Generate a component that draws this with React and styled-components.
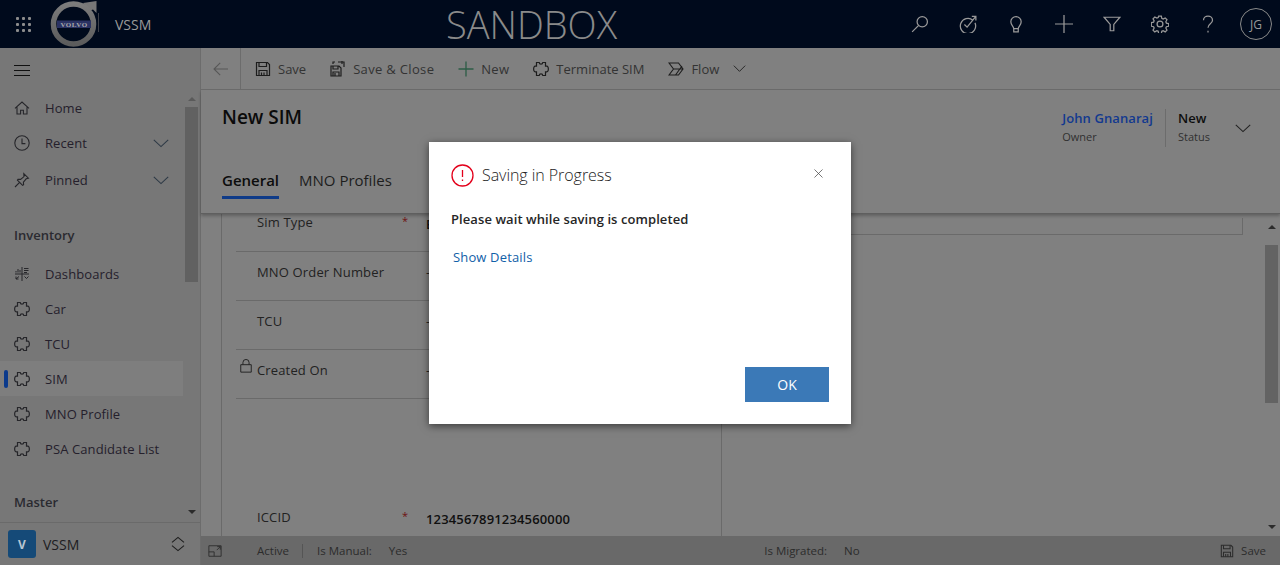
import React from 'react'
import styled, { createGlobalStyle } from 'styled-components'
import { X } from 'lucide-react'

const Global = createGlobalStyle`
  html, body { margin: 0; padding: 0; height: 100%; overflow: hidden; }
  body { font-family: "Open Sans", "Liberation Sans", sans-serif; }
  * { box-sizing: border-box; }
`

const IcoSvg = styled.svg`
  flex: none;
  display: block;
`

// svg helper, everything here is thin line icons
const Ico = ({ size = 16, w = 1.1, children }) => (
  <IcoSvg width={size} height={size} viewBox="0 0 16 16" fill="none" stroke="currentColor" strokeWidth={w}>
    {children}
  </IcoSvg>
)

const Puzzle = ({ size = 16 }) => (
  <Ico size={size} w={1.2}>
    <path d="M3.500 1.500H6.200c.1 2.200 3.500 2.200 3.600 0h2.700v3.700h1.200c2.200-.3 2.200 5.900 0 5.600h-1.200v3.700H9.800c-.1-2.200-3.500-2.200-3.600 0H3.500v-3.700H2.300c-2.200.3-2.200-5.900 0-5.600h1.200z" />
  </Ico>
)

const SaveIcon = ({ size = 16 }) => (
  <Ico size={size} w={1.2}>
    <path d="M1.500 1.500h11l2 2v11h-13z" />
    <path d="M4 1.500v4h7.500v-4M4 14.500V9.500h8v5M6.500 11.500v3M9 11.500v3" />
  </Ico>
)

const Chevron = ({ size = 16 }) => (
  <Ico size={size}>
    <path d="M.8 4.800 8 11.600l7.200-6.800" />
  </Ico>
)

const Page = styled.div`
  position: relative;
  width: 1280px;
  height: 565px;
  display: flex;
  flex-direction: column;
  overflow: hidden;
  background: #808080;
`

const TopBar = styled.header`
  height: 48px;
  flex: none;
  background: #000a1c;
  display: flex;
  align-items: center;
  color: #a0a0a0;
`

const Waffle = styled.div`
  width: 16px;
  height: 15px;
  margin-left: 16px;
  display: grid;
  grid-template-columns: repeat(3, 3px);
  grid-auto-rows: 3px;
  gap: 3px;
  span { background: #8c8c8c; border-radius: 1px; }
`

const LogoWrap = styled.div`
  margin-left: 18px;
  width: 50px;
  height: 48px;
  flex: none;
`

const AppName = styled.div`
  margin-left: 15px;
  font-size: 14px;
  color: #9a9a9a;
  width: 60px;
`

const Sandbox = styled.div`
  margin-left: 271px;
  line-height: 48px;
  font-size: 38px;
  font-weight: 300;
  color: #8a8a8a;
`

const TopIcons = styled.div`
  margin-left: auto;
  display: flex;
  align-items: center;
`

const TopBtn = styled.div`
  width: 48px;
  height: 48px;
  display: flex;
  align-items: center;
  justify-content: center;
  color: #9a9a9a;
`

const Avatar = styled.div`
  width: 32px;
  height: 32px;
  margin: 0 8px;
  border: 1px solid #8a8a8a;
  border-radius: 50%;
  display: flex;
  align-items: center;
  justify-content: center;
  font-size: 12px;
  color: #9a9a9a;
`

const Body = styled.div`
  flex: 1;
  min-height: 0;
  display: flex;
`

const Side = styled.aside`
  width: 201px;
  flex: none;
  background: #777777;
  border-right: 1px solid #6c6c6c;
  display: flex;
  flex-direction: column;
  position: relative;
`

const Burger = styled.div`
  height: 42px;
  flex: none;
  padding: 17px 0 0 14px;
  i { display: block; width: 16px; height: 1px; background: #111; margin-bottom: 4px; }
`

const NavScroll = styled.div`
  flex: 1;
  min-height: 0;
  overflow: hidden;
`

const NavRow = styled.div`
  height: ${p => p.$h || 35}px;
  width: 183px;
  display: flex;
  align-items: center;
  padding-left: 14px;
  font-size: 13px;
  letter-spacing: 0.1px;
  color: #25202c;
  position: relative;
  background: ${p => (p.$active ? '#7e7e7e' : 'transparent')};
`

const NavIcon = styled.span`
  width: 31px;
  flex: none;
  color: #26262a;
`

const NavChevron = styled.span`
  margin-left: auto;
  margin-right: 14px;
  color: #2e3a46;
`

const ActiveMark = styled.i`
  position: absolute;
  left: 4px;
  top: 9px;
  width: 4px;
  height: 18px;
  border-radius: 2px;
  background: #0b3a8c;
`

const SectionLabel = styled.div`
  height: ${p => p.$h}px;
  padding: ${p => p.$top}px 0 0 14px;
  font-size: 13px;
  font-weight: 600;
  color: #2a2a30;
`

const SideScroll = styled.div`
  position: absolute;
  right: 0;
  top: 42px;
  bottom: 43px;
  width: 16px;
  padding: 7px 0 8px;
  display: flex;
  flex-direction: column;
  align-items: center;
  justify-content: space-between;
`

const Arrow = styled.i`
  display: block;
  width: 0;
  height: 0;
  border-left: 4px solid transparent;
  border-right: 4px solid transparent;
  ${p => (p.$down ? 'border-top: 4px solid #2b2b2b;' : `border-bottom: 4px solid ${p.$color || '#2b2b2b'};`)}
`

const SideThumb = styled.div`
  position: absolute;
  left: 1px;
  top: 17px;
  width: 13px;
  height: 175px;
  background: #616161;
`

const AreaSwitch = styled.div`
  height: 43px;
  flex: none;
  border-top: 1px solid #6a6a6a;
  display: flex;
  align-items: center;
  padding-left: 8px;
  font-size: 14px;
  color: #1d1d22;
`

const AreaBadge = styled.div`
  width: 28px;
  height: 28px;
  border-radius: 3px;
  background: #154a78;
  color: #b9c6d2;
  font-size: 12px;
  font-weight: 700;
  display: flex;
  align-items: center;
  justify-content: center;
  margin-right: 7px;
`

const AreaSort = styled.div`
  margin-left: auto;
  margin-right: 14px;
  color: #1e1e1e;
`

const Main = styled.main`
  flex: 1;
  min-width: 0;
  display: flex;
  flex-direction: column;
`

const CommandBar = styled.div`
  height: 42px;
  flex: none;
  display: flex;
  align-items: center;
  border-bottom: 1px solid #6c6c6c;
  font-size: 13px;
  color: #2b2b2b;
`

const BackBtn = styled.div`
  width: 40px;
  height: 41px;
  display: flex;
  align-items: center;
  justify-content: center;
  border-right: 1px solid #6c6c6c;
  color: #575757;
  margin-right: 2px;
`

const Cmd = styled.div`
  display: flex;
  align-items: center;
  gap: 7px;
  padding: 0 12px;
  white-space: nowrap;
  color: #333;
  letter-spacing: ${p => p.$ls || 0}px;
  svg { color: ${p => p.$icon || '#1d1d1d'}; }
`

const CmdMore = styled.span`
  margin-left: 7px;
  color: #444;
`

const FormHead = styled.div`
  height: 124px;
  flex: none;
  position: relative;
  padding: 0 21px;
  box-shadow: 0 2px 3px rgba(0, 0, 0, 0.25);
  border-bottom: 1px solid #5f5f5f;
  z-index: 1;
`

const Title = styled.h1`
  margin: 0;
  padding-top: 13px;
  font-size: 19px;
  line-height: 28px;
  font-weight: 600;
  color: #0b0b0b;
`

const Tabs = styled.div`
  display: flex;
  gap: 20px;
  margin-top: 37px;
  font-size: 15px;
`

const Tab = styled.div`
  height: 31px;
  line-height: 25px;
  color: ${p => (p.$on ? '#0c0c0c' : '#1d1d1d')};
  font-weight: ${p => (p.$on ? 600 : 400)};
  border-bottom: ${p => (p.$on ? '3px solid #0f3b88' : '3px solid transparent')};
`

const HeadRight = styled.div`
  position: absolute;
  top: 19px;
  right: 29px;
  display: flex;
  align-items: center;
`

const HeadField = styled.div`
  height: 38px;
  padding: ${p => (p.$first ? '0 12px 0 0' : '0 0 0 12px')};
  border-left: ${p => (p.$first ? 'none' : '1px solid #6c6c6c')};
  width: ${p => (p.$first ? 'auto' : '70px')};
`

const HeadValue = styled.div`
  font-size: 13px;
  line-height: 19px;
  font-weight: 600;
  letter-spacing: 0.1px;
  color: ${p => p.$color || '#0d0d0d'};
`

const HeadLabel = styled.div`
  font-size: 11px;
  line-height: 17px;
  color: #303030;
`

const HeadChevron = styled.span`
  color: #222;
`

const FormArea = styled.div`
  flex: 1;
  min-height: 0;
  display: flex;
  position: relative;
  padding-left: 20px;
  overflow: hidden;
`

const Column = styled.div`
  width: 501px;
  flex: none;
  margin-top: -1px;
  border-left: 1px solid #6a6a6a;
  border-right: 1px solid #6a6a6a;
  padding: 0 0 0 14px;
  display: flex;
  flex-direction: column;
`

const Field = styled.div`
  height: ${p => p.$h || 49}px;
  margin-top: ${p => p.$mt || 0}px;
  flex: none;
  width: 485px;
  display: grid;
  grid-template-columns: 190px 1fr;
  align-items: start;
  padding-top: ${p => p.$top ?? 11}px;
  font-size: 13px;
  line-height: 18px;
  letter-spacing: 0.15px;
  color: #222;
  border-bottom: ${p => (p.$plain ? 'none' : '1px solid #6a6a6a')};
`

const FieldName = styled.div`
  position: relative;
  padding-left: 21px;
`

const Req = styled.span`
  position: absolute;
  left: 166px;
  top: 2px;
  line-height: 12px;
  color: #6e1010;
  font-size: 11px;
`

const FieldLock = styled.span`
  position: absolute;
  left: 3px;
  top: -2px;
  color: #222;
`

const FieldValue = styled.div`
  color: ${p => (p.$strong ? '#101010' : '#222')};
  font-weight: ${p => (p.$strong ? 600 : 400)};
  margin-top: ${p => (p.$strong ? 2 : 0)}px;
`

const Scrollbar = styled.div`
  position: absolute;
  top: 0;
  right: 0;
  bottom: 0;
  width: 17px;
  background: #808080;
  display: flex;
  flex-direction: column;
  align-items: center;
  justify-content: space-between;
  padding: 11px 0 7px;
`

const Thumb = styled.div`
  position: absolute;
  left: 2px;
  top: 31px;
  width: 13px;
  height: 158px;
  background: #636363;
`

const RightInput = styled.div`
  flex: 1;
  margin: 4px 37px 0 0;
  height: 17px;
  border-right: 1px solid #6a6a6a;
  border-bottom: 1px solid #6a6a6a;
`

const StatusBar = styled.footer`
  height: 29px;
  flex: none;
  background: #696969;
  display: flex;
  align-items: center;
  font-size: 11.5px;
  color: #2c2c2c;
  padding-left: 7px;
`

const StatusCell = styled.span`
  margin-left: ${p => p.$ml || 0}px;
  white-space: nowrap;
`

const StatusDivider = styled.i`
  width: 1px;
  height: 14px;
  background: #555;
  margin: 0 14px 0 13px;
`

const StatusSave = styled.div`
  margin-left: auto;
  margin-right: 14px;
  display: flex;
  align-items: center;
  gap: 7px;
`

const Scrim = styled.div`
  position: absolute;
  inset: 0;
  z-index: 2;
  pointer-events: none;
`

const Dialog = styled.div`
  position: absolute;
  left: 429px;
  top: 142px;
  width: 422px;
  height: 282px;
  background: #fff;
  box-shadow: 0 2px 8px rgba(0, 0, 0, 0.55);
  padding: 22px;
  display: flex;
  flex-direction: column;
`

const DialogHead = styled.div`
  display: flex;
  align-items: center;
  gap: 8px;
  height: 23px;
`

const DialogTitle = styled.h2`
  margin: -1px 0 0;
  font-size: 16px;
  font-weight: 300;
  letter-spacing: -0.05px;
  color: #222;
  flex: 1;
`

const DialogClose = styled.div`
  color: #4a4a4a;
  margin: -2px 3px 0 0;
`

const DialogText = styled.p`
  margin: 22px 0 0;
  font-size: 13px;
  line-height: 20px;
  font-weight: 600;
  letter-spacing: 0.08px;
  color: #262626;
`

const DetailsLink = styled.a`
  margin: 18px 0 0 2px;
  font-size: 13px;
  line-height: 20px;
  letter-spacing: 0.15px;
  color: #1160a8;
`

const DialogFoot = styled.div`
  margin-top: auto;
  display: flex;
  justify-content: flex-end;
`

const OkBtn = styled.button`
  width: 84px;
  height: 35px;
  border: none;
  background: #3b79b7;
  color: #fff;
  font-family: inherit;
  font-size: 14px;
`

const VolvoLogo = () => (
  <svg width="50" height="48" viewBox="0 0 50 48">
    <defs>
      <linearGradient id="ring" x1="0" y1="0" x2="0" y2="1">
        <stop offset="0" stopColor="#7c7c7c" />
        <stop offset="1" stopColor="#5c5c5c" />
      </linearGradient>
    </defs>
    <path d="M33 3 46.500 1v12L43 9.500 39 11z" fill="#777" />
    <circle cx="23.500" cy="24" r="20" fill="none" stroke="url(#ring)" strokeWidth="5.500" />
    <rect x="7" y="20.500" width="34" height="7.500" fill="#2a3263" />
    <text x="24" y="27" textAnchor="middle" fontFamily="Liberation Serif, serif" fontSize="7" fontWeight="700" letterSpacing="0.5" fill="#a9a9a9">VOLVO</text>
    <path d="M48.500 13v19" stroke="#3c3f48" strokeWidth="1" />
  </svg>
)

const navTop = [
  { label: 'Home', icon: <Ico><path d="M1 8.400 8 2l7 6.400M3 7.200V14h3.600v-3.800h2.800V14H13V7.200" /></Ico> },
  { label: 'Recent', icon: <Ico><circle cx="8" cy="8" r="7.200" /><path d="M8 3.600V8.600h3.400" /></Ico>, more: true },
  { label: 'Pinned', icon: <Ico><path d="M1 15l4.400-4.400M9.800 1.600l4.600 4.600-2.200.6-2.800 3.400.2 2.600-1 .6-5.200-5.200.6-1 2.600.2 3.400-2.800z" /></Ico>, more: true, h: 39 },
]

const navInventory = [
  { label: 'Dashboards', icon: <Ico w={1}><path d="M8 1v14M1 8h14M2 6.500V5M4 6.500V3M6 6.500V4M10 2.500h4.500M10 4.500h4.500M10 6.500h3M2 13l3-2.500M2 10.500v2.500h2.500M10.500 10.500l2 2 2-2" /></Ico> },
  { label: 'Car', icon: <Puzzle /> },
  { label: 'TCU', icon: <Puzzle /> },
  { label: 'SIM', icon: <Puzzle />, active: true },
  { label: 'MNO Profile', icon: <Puzzle /> },
  { label: 'PSA Candidate List', icon: <Puzzle /> },
]

const NavItem = ({ item }) => (
  <NavRow $active={item.active} $h={item.h}>
    {item.active && <ActiveMark />}
    <NavIcon>{item.icon}</NavIcon>
    {item.label}
    {item.more && <NavChevron><Chevron /></NavChevron>}
  </NavRow>
)

export default function App() {
  return (
    <>
      <Global />
      <Page>
        <TopBar>
          <Waffle>{Array.from({ length: 9 }, (_, i) => <span key={i} />)}</Waffle>
          <LogoWrap><VolvoLogo /></LogoWrap>
          <AppName>VSSM</AppName>
          <Sandbox>SANDBOX</Sandbox>
          <TopIcons>
            <TopBtn>
              <Ico size={18}><circle cx="10" cy="6" r="4.600" /><path d="M6.600 9.400 1 15" /></Ico>
            </TopBtn>
            <TopBtn>
              <Ico size={18}><path d="M12.400 4.600A6.800 6.800 0 1 0 14.200 7" /><path d="M4.800 8.400l2.400 2.400L14.600 1.600M11.400 1.200h3.600v3.600" /></Ico>
            </TopBtn>
            <TopBtn>
              <Ico size={18}><path d="M6 12.200c0-2.400-2.600-3-2.600-6.200a4.600 4.600 0 0 1 9.200 0c0 3.200-2.600 3.800-2.600 6.200zM6 12.200V15h4v-2.800" /></Ico>
            </TopBtn>
            <TopBtn>
              <Ico size={18}><path d="M8 0v16M0 8h16" /></Ico>
            </TopBtn>
            <TopBtn>
              <Ico size={18}><path d="M1 2h14L9.600 8.400V14H6.400V8.400z" /></Ico>
            </TopBtn>
            <TopBtn>
              <Ico size={18}><circle cx="8" cy="8" r="2.600" /><path d="M6.800 1h2.400l.4 2 1.200.6 1.800-1 1.600 1.600-1 1.800.5 1.200 2 .4v2.400l-2 .4-.5 1.200 1 1.800-1.600 1.600-1.800-1-1.200.5-.4 2H6.800l-.4-2-1.200-.5-1.800 1-1.600-1.600 1-1.800-.5-1.200-2-.4V6.800l2-.4.5-1.200-1-1.800 1.600-1.600 1.800 1 1.200-.6z" /></Ico>
            </TopBtn>
            <TopBtn>
              <Ico size={18}><path d="M4 4.600C4 2.400 5.800 1 8 1s4 1.500 4 3.600c0 3.400-4 3-4 6.800M8 14v1.600" /></Ico>
            </TopBtn>
            <Avatar>JG</Avatar>
          </TopIcons>
        </TopBar>

        <Body>
          <Side>
            <Burger><i /><i /><i /></Burger>
            <NavScroll>
              {navTop.map(item => <NavItem key={item.label} item={item} />)}
              <SectionLabel $h={57} $top={27}>Inventory</SectionLabel>
              {navInventory.map(item => <NavItem key={item.label} item={item} />)}
              <SectionLabel $h={50} $top={27}>Master</SectionLabel>
            </NavScroll>
            <SideScroll>
              <Arrow $color="#5a5a5a" />
              <SideThumb />
              <Arrow $down />
            </SideScroll>
            <AreaSwitch>
              <AreaBadge>V</AreaBadge>
              VSSM
              <AreaSort>
                <Ico><path d="M2 6.400 8 1.400l6 5M2 9.600l6 5 6-5" /></Ico>
              </AreaSort>
            </AreaSwitch>
          </Side>

          <Main>
            <CommandBar>
              <BackBtn>
                <Ico><path d="M15 8H1M7.200 1.800 1 8l6.200 6.200" /></Ico>
              </BackBtn>
              <Cmd><SaveIcon />Save</Cmd>
              <Cmd $ls={0.33}>
                <Ico w={1.2}><path d="M1 5h8l2 2v8H1zM3 5v3h5V5M3 15v-4h6v4M5 12v3M8 1h6v5M12 0v3M5 1H3v2" /></Ico>
                Save &amp; Close
              </Cmd>
              <Cmd $icon="#2c5c45" $ls={0.3}><Ico w={1.3}><path d="M8 .5v15M.5 8h15" /></Ico>New</Cmd>
              <Cmd><Puzzle />Terminate SIM</Cmd>
              <Cmd>
                <Ico><path d="M1 2h9.500L15 8l-4.500 6H1l4.500-6zM5.500 8H15M7.500 14 14 5" /></Ico>
                Flow
                <CmdMore><Ico size={13}><path d="M1 4.500 8 11.500l7-7" /></Ico></CmdMore>
              </Cmd>
            </CommandBar>

            <FormHead>
              <Title>New SIM</Title>
              <Tabs>
                <Tab $on>General</Tab>
                <Tab>MNO Profiles</Tab>
              </Tabs>
              <HeadRight>
                <HeadField $first>
                  <HeadValue $color="#12398f">John Gnanaraj</HeadValue>
                  <HeadLabel>Owner</HeadLabel>
                </HeadField>
                <HeadField>
                  <HeadValue>New</HeadValue>
                  <HeadLabel>Status</HeadLabel>
                </HeadField>
                <HeadChevron><Chevron /></HeadChevron>
              </HeadRight>
            </FormHead>

            <FormArea>
              <Column>
                <Field $h={39} $top={0}>
                  <FieldName>Sim Type<Req>*</Req></FieldName>
                  <FieldValue $strong>E</FieldValue>
                </Field>
                <Field>
                  <FieldName>MNO Order Number</FieldName>
                  <FieldValue>---</FieldValue>
                </Field>
                <Field>
                  <FieldName>TCU</FieldName>
                  <FieldValue>---</FieldValue>
                </Field>
                <Field>
                  <FieldName>
                    <FieldLock><Ico size={14}><path d="M2 6.500h12V15H2zM4.500 6.500V4a3.500 3.500 0 0 1 7 0v2.500" /></Ico></FieldLock>
                    Created On
                  </FieldName>
                  <FieldValue>---</FieldValue>
                </Field>
                <Field $plain $mt={104} $h={40} $top={5}>
                  <FieldName>ICCID<Req>*</Req></FieldName>
                  <FieldValue $strong>1234567891234560000</FieldValue>
                </Field>
              </Column>
              <RightInput />
              <Scrollbar>
                <Arrow />
                <Thumb />
                <Arrow $down />
              </Scrollbar>
            </FormArea>

            <StatusBar>
              <Ico size={14} w={1}><path d="M1 2h14v12H1zM1 9h6v5M10 7l4-4M10.500 3H14v3.500" /></Ico>
              <StatusCell $ml={35}>Active</StatusCell>
              <StatusDivider />
              <StatusCell>Is Manual:</StatusCell>
              <StatusCell $ml={17}>Yes</StatusCell>
              <StatusCell $ml={357}>Is Migrated:</StatusCell>
              <StatusCell $ml={17}>No</StatusCell>
              <StatusSave><SaveIcon size={14} />Save</StatusSave>
            </StatusBar>
          </Main>
        </Body>

        <Scrim>
          <Dialog>
            <DialogHead>
              <svg width="23" height="23" viewBox="0 0 23 23">
                <circle cx="11.500" cy="11.500" r="10.500" fill="none" stroke="#e3001b" strokeWidth="1.300" />
                <path d="M11.500 6v7M11.500 15.500v1.500" stroke="#e3001b" strokeWidth="1.300" />
              </svg>
              <DialogTitle>Saving in Progress</DialogTitle>
              <DialogClose><X size={15} strokeWidth={1.2} /></DialogClose>
            </DialogHead>
            <DialogText>Please wait while saving is completed</DialogText>
            <DetailsLink>Show Details</DetailsLink>
            <DialogFoot><OkBtn>OK</OkBtn></DialogFoot>
          </Dialog>
        </Scrim>
      </Page>
    </>
  )
}
